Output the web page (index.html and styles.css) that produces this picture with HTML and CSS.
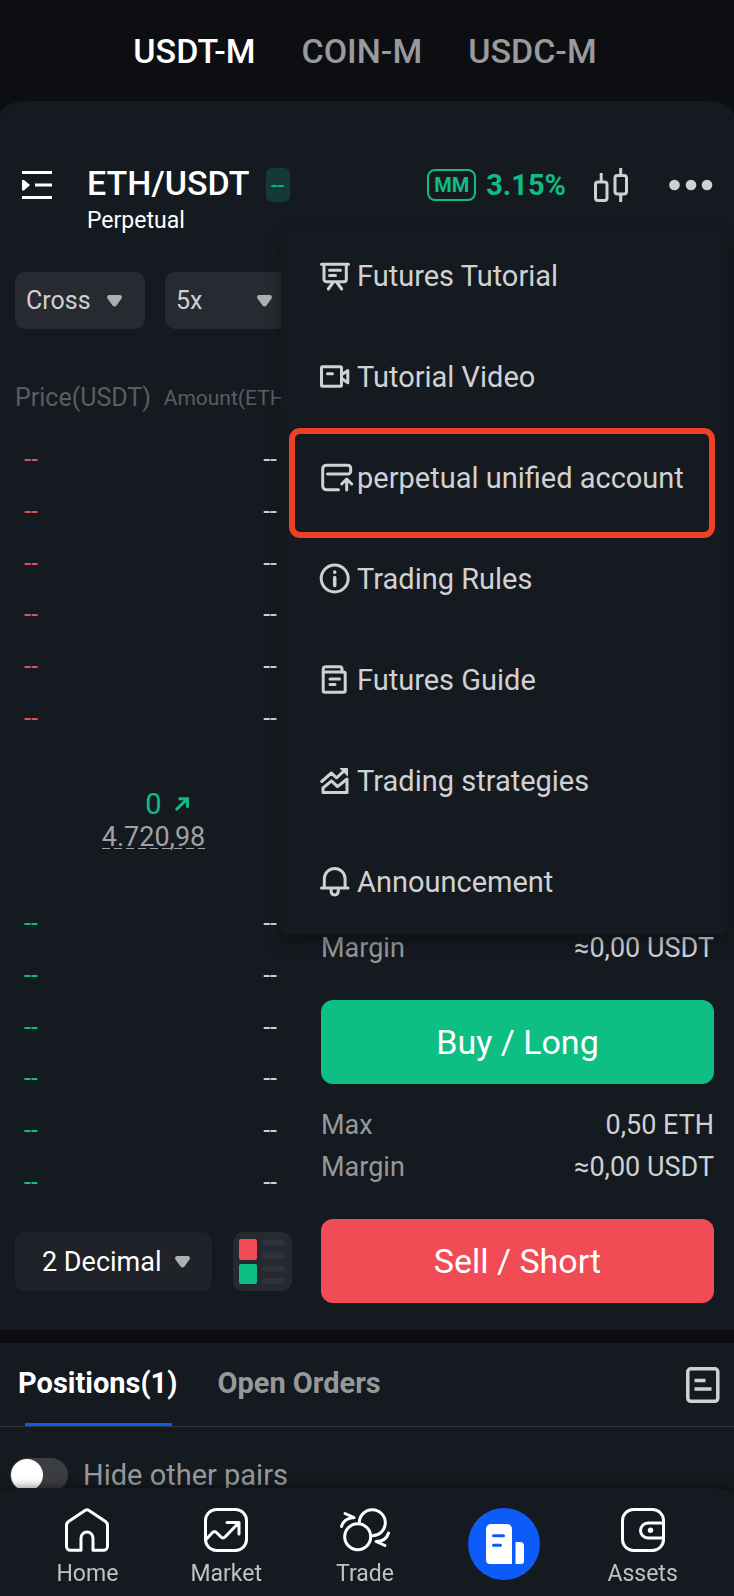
FILE: index.html
```html
<!DOCTYPE html>
<html lang="en">
<head>
    <meta charset="UTF-8">
    <meta name="viewport" content="width=device-width, initial-scale=1.0">
    <title>ETH/USDT Perpetual</title>
    <link rel="stylesheet" href="styles.css">
</head>
<body>

    <!-- Market type -->
    <nav class="market-tabs">
        <a href="#" class="active">USDT-M</a>
        <a href="#">COIN-M</a>
        <a href="#">USDC-M</a>
    </nav>

    <main class="panel">

        <header class="pair-header">
            <button class="icon-btn" aria-label="Pairs">
                <svg width="30" height="28" viewBox="0 0 30 28">
                    <path d="M0 1.5h30M13 14h17M0 26.5h30" stroke="#fff" stroke-width="3"/>
                    <path d="M0 9v10.500l2 0l6-5.500l-6-5z" fill="#fff"/>
                </svg>
            </button>
            <div class="pair">
                <div class="pair-name">
                    <h1>ETH/USDT</h1>
                    <span class="change">--</span>
                </div>
                <p>Perpetual</p>
            </div>
            <div class="pair-tools">
                <span class="mm">MM</span>
                <span class="rate">3.15%</span>
                <button class="icon-btn candles" aria-label="Chart">
                    <svg width="34" height="36" viewBox="0 0 34 36" fill="none" stroke="#d0d0d2" stroke-width="3">
                        <rect x="1.500" y="15" width="11.500" height="18.500" rx="2.500"/>
                        <rect x="21" y="8.500" width="11.500" height="18.500" rx="2.500"/>
                        <path d="M7.200 6v9M26.700 1v7M26.700 27v8"/>
                    </svg>
                </button>
                <button class="icon-btn" aria-label="More">
                    <svg width="44" height="12" viewBox="0 0 44 12" fill="#d0d0d2">
                        <circle cx="5.500" cy="6" r="5.300"/>
                        <circle cx="22" cy="6" r="5.300"/>
                        <circle cx="38" cy="6" r="5.300"/>
                    </svg>
                </button>
            </div>
        </header>

        <div class="settings">
            <div class="select">
                <select aria-label="Margin mode">
                    <option>Cross</option>
                    <option>Isolated</option>
                </select>
                <svg class="caret" viewBox="0 0 15 12"><path d="M2 0h11q3 1 1.500 3.500l-5 7q-2 2-4 0l-5-7Q-1 1 2 0z"/></svg>
            </div>
            <div class="select">
                <select aria-label="Leverage">
                    <option>5x</option>
                    <option>10x</option>
                </select>
                <svg class="caret" viewBox="0 0 15 12"><path d="M2 0h11q3 1 1.500 3.500l-5 7q-2 2-4 0l-5-7Q-1 1 2 0z"/></svg>
            </div>
        </div>

        <div class="trade">

            <!-- Order book -->
            <section class="book">
                <table class="asks">
                    <thead>
                        <tr><th>Price(USDT)</th><th class="amount">Amount(ETH)</th></tr>
                    </thead>
                    <tbody>
                        <tr><td>--</td><td>--</td></tr>
                        <tr><td>--</td><td>--</td></tr>
                        <tr><td>--</td><td>--</td></tr>
                        <tr><td>--</td><td>--</td></tr>
                        <tr><td>--</td><td>--</td></tr>
                        <tr><td>--</td><td>--</td></tr>
                    </tbody>
                </table>

                <div class="last-price">
                    <div class="last">
                        <span>0</span>
                        <svg width="14" height="14" viewBox="0 0 14 14" fill="none" stroke="#0fbd83" stroke-width="3">
                            <path d="M1 13L12 2M3.500 1.700h9v9"/>
                        </svg>
                    </div>
                    <div class="mark">4.720,98</div>
                </div>

                <table class="bids">
                    <tbody>
                        <tr><td>--</td><td>--</td></tr>
                        <tr><td>--</td><td>--</td></tr>
                        <tr><td>--</td><td>--</td></tr>
                        <tr><td>--</td><td>--</td></tr>
                        <tr><td>--</td><td>--</td></tr>
                        <tr><td>--</td><td>--</td></tr>
                    </tbody>
                </table>

                <div class="book-tools">
                    <div class="select decimals">
                        <select aria-label="Decimals">
                            <option>2 Decimal</option>
                            <option>1 Decimal</option>
                        </select>
                        <svg class="caret" viewBox="0 0 15 12"><path d="M2 0h11q3 1 1.500 3.500l-5 7q-2 2-4 0l-5-7Q-1 1 2 0z"/></svg>
                    </div>
                    <button class="depth" aria-label="Depth view">
                        <svg width="59" height="59" viewBox="0 0 59 59">
                            <rect x="6" y="7" width="18" height="21" rx="2" fill="#f14b56"/>
                            <rect x="6" y="32" width="18" height="20" rx="2" fill="#0dbf82"/>
                            <path d="M32 10.500h17M32 23.500h17M32 36.500h17M32 49h17" stroke="#30333b" stroke-width="6" stroke-linecap="round"/>
                        </svg>
                    </button>
                </div>
            </section>

            <!-- Order form -->
            <section class="order">
                <dl>
                    <div><dt>Margin</dt><dd>≈0,00 USDT</dd></div>
                </dl>
                <button class="buy">Buy / Long</button>
                <dl>
                    <div><dt>Max</dt><dd>0,50 ETH</dd></div>
                    <div><dt>Margin</dt><dd>≈0,00 USDT</dd></div>
                </dl>
                <button class="sell">Sell / Short</button>
            </section>
        </div>

        <!-- Menu opened from the three dots -->
        <div class="menu">
            <a href="#">
                <svg class="menu-icon" viewBox="0 0 30 30">
                    <path d="M1.500 3.300h27M4 4v14.500a2.200 2.200 0 0 0 2.200 2.200h17.900a2.200 2.200 0 0 0 2.200-2.200V4M9.500 9.300h11M9.500 14.500h6M13 21.500L8.300 28M17 21.500l4.700 6.500"/>
                </svg>
                Futures Tutorial
            </a>
            <a href="#">
                <svg class="menu-icon" viewBox="0 0 30 30">
                    <rect x="1.500" y="4.700" width="20" height="19.500" rx="1"/>
                    <path d="M7.500 11.700h5M22 12.500l5.800-4v12.300l-5.800-4"/>
                </svg>
                Tutorial Video
            </a>
            <a href="#" class="marked">
                <svg class="menu-icon" viewBox="0 0 30 30">
                    <path d="M18.500 26.700H6.500a3.800 3.800 0 0 1-3.800-3.800V5.800a3.500 3.500 0 0 1 3.500-3.500h21.500a3 3 0 0 1 3 3v3a2.700 2.700 0 0 1-2.700 2.700H7.500M26.700 27V16M21.700 21l5-5l5 5"/>
                </svg>
                perpetual unified account
            </a>
            <a href="#">
                <svg class="menu-icon" viewBox="0 0 30 30">
                    <circle cx="14.700" cy="14.500" r="13.500"/>
                    <path d="M14.700 13.500v8M14.700 8v.2" stroke-width="3.500"/>
                </svg>
                Trading Rules
            </a>
            <a href="#">
                <svg class="menu-icon" viewBox="0 0 30 30">
                    <rect x="3.200" y="7" width="22" height="20.300" rx="1.500"/>
                    <path d="M3.200 8V4.200a2.500 2.500 0 0 1 2.500-2.500h14a2.300 2.300 0 0 1 2.300 2.300V7M10 14h9.500M10 19.500h5"/>
                </svg>
                Futures Guide
            </a>
            <a href="#">
                <svg class="menu-icon" viewBox="0 0 30 30">
                    <path d="M1.700 15.500l9.800-8.500l5 4.800L24 5M3 26.500v-4.500l8.500-7.200l6 5.800l9.500-7.600v13.500z"/>
                    <path d="M20.500 2.500h7v7z" fill="#d1d1d3" stroke-width="1"/>
                </svg>
                Trading strategies
            </a>
            <a href="#">
                <svg class="menu-icon" viewBox="0 0 30 30">
                    <path d="M1.500 21h26.500M4.300 20.500V11.800a10.400 10.400 0 0 1 20.800 0v8.700M11 22.500q0 5.500 3.700 5.500t3.700-5.500"/>
                </svg>
                Announcement
            </a>
        </div>
    </main>

    <section class="positions">
        <div class="position-tabs">
            <button class="active">Positions(1)</button>
            <button>Open Orders</button>
            <button class="icon-btn history" aria-label="Order history">
                <svg width="34" height="36" viewBox="0 0 34 36" fill="none" stroke="#d1d1d3" stroke-width="3.500">
                    <rect x="1.800" y="1.800" width="30" height="32.500" rx="3"/>
                    <path d="M8.500 13.500h11M8.500 22h17"/>
                </svg>
            </button>
        </div>
        <label class="hide-pairs">
            <input type="checkbox">
            Hide other pairs
        </label>
    </section>

    <nav class="bottom-nav">
        <a href="#">
            <svg width="44" height="44" viewBox="0 0 44 44">
                <path d="M16 42.300H5.500a4 4 0 0 1-4-4V17.500q0-2.500 2-4L20 2.500q2-1.300 4 0l16.500 11q2 1.500 2 4v20.800a4 4 0 0 1-4 4H28V30a6 6 0 0 0-12 0z"/>
            </svg>
            Home
        </a>
        <a href="#">
            <svg width="44" height="44" viewBox="0 0 44 44">
                <rect x="1.500" y="1.500" width="41" height="41" rx="11"/>
                <path d="M2.500 31l6-6.500q2-2 4 0l4.500 4.500q2 1.800 4 0L34.500 15M23 14.500h12v11.500"/>
            </svg>
            Market
        </a>
        <a href="#">
            <svg width="50" height="44" viewBox="0 0 50 44">
                <circle cx="17.700" cy="28.700" r="13"/>
                <path d="M19.300 15A13 13 0 1 1 31.500 27.700M1.500 18.500C3 13 7 10 14 9.500L5 5.500M48.500 25C47 30 43 33.500 36 33.500L45 37.500"/>
            </svg>
            Trade
        </a>
        <a href="#" aria-label="Futures">
            <svg class="futures" width="72" height="72" viewBox="0 0 72 72">
                <circle cx="36" cy="36" r="36" fill="#0b5cf8"/>
                <path d="M23 16h16a5 5 0 0 1 5 5v35H22a4 4 0 0 1-4-4V21a5 5 0 0 1 5-5zM47.500 34H52a4 4 0 0 1 4 4v15a3 3 0 0 1-3 3h-5.500z" fill="#fff"/>
                <path d="M25.500 27.700h10M25.500 37.300h7" stroke="#0b5cf8" stroke-width="3"/>
            </svg>
        </a>
        <a href="#">
            <svg width="44" height="44" viewBox="0 0 44 44">
                <rect x="1.500" y="1.500" width="41" height="41" rx="11"/>
                <path d="M42 15H27a7.500 7.500 0 0 0 0 15h15"/>
                <circle cx="29.500" cy="22.300" r="2.700" fill="#fff" stroke="none"/>
            </svg>
            Assets
        </a>
    </nav>

</body>
</html>
```
FILE: styles.css
```css
* {
    box-sizing: border-box;
}

body {
    font-family: Roboto, sans-serif;
    background-color: #0d0e12;
    color: #fff;
    margin: 0;
    min-height: 100vh;
    display: flex;
    flex-direction: column;
}

a {
    color: inherit;
    text-decoration: none;
}

button {
    font-family: inherit;
    color: inherit;
    background: none;
    border: none;
    padding: 0;
    cursor: pointer;
}

svg {
    display: block;
    overflow: visible;
}

/* Market tabs */
.market-tabs {
    display: flex;
    justify-content: center;
    gap: 46px;
    padding: 1px 4px 0 0;
    font-size: 34px;
    font-weight: 500;
    line-height: 100px;
    color: #999a9c;
}

.market-tabs .active {
    color: #fff;
}

/* Panel */
.panel {
    position: relative;
    background-color: #151a20;
    border-radius: 28px 28px 0 0 / 14px 14px 0 0;
    padding: 62px 0 27px;
}

.pair-header {
    display: flex;
    align-items: flex-start;
    padding: 0 21px 0 22px;
}

.icon-btn {
    display: flex;
    align-items: center;
    height: 44px;
}

.pair {
    flex: 1;
    margin-left: 35px;
}

.pair-name {
    display: flex;
    align-items: center;
    gap: 16px;
    height: 40px;
}

.pair-name h1 {
    margin: 0;
    font-size: 34px;
    font-weight: 500;
}

.pair p {
    margin: 0;
    font-size: 23px;
    line-height: 36px;
}

.change {
    width: 24px;
    margin-top: 4px;
    border-radius: 6px;
    background-color: #143a37;
    color: #0fbd83;
    font-size: 24px;
    line-height: 34px;
    text-align: center;
}

.pair-tools {
    display: flex;
    align-items: center;
    color: #0fbd83;
    height: 44px;
}

.mm {
    border: 2px solid #0fbd83;
    border-radius: 8px;
    padding: 0 5px;
    font-size: 20px;
    font-weight: 700;
    line-height: 28px;
}

.rate {
    margin-left: 10px;
    font-size: 29px;
    font-weight: 700;
}

.candles {
    margin: 0 41px 0 28px;
}

/* Drop-downs */
.settings {
    display: flex;
    gap: 20px;
    padding: 33px 15px 0;
}

.select {
    display: grid;
    align-items: center;
    width: 130px;
    height: 57px;
    border-radius: 10px;
    background-color: #282a31;
    color: #d0d0d2;
}

.select select,
.caret {
    grid-area: 1 / 1;
}

.select select {
    appearance: none;
    width: 100%;
    height: 100%;
    padding: 0 0 1px 11px;
    border: none;
    background: none;
    color: inherit;
    font-family: inherit;
    font-size: 25px;
}

.caret {
    justify-self: end;
    width: 15px;
    margin-right: 23px;
    fill: #aeafb2;
    pointer-events: none;
}

/* Order book */
.trade {
    display: grid;
    grid-template-columns: 277px 1fr;
    gap: 29px;
    padding: 47px 20px 0 15px;
}

.book {
    padding-bottom: 12px;
}

.book table {
    width: 100%;
    border-collapse: collapse;
    font-size: 25px;
}

.book th {
    padding: 0 0 14px;
    font-size: 25px;
    font-weight: 400;
    line-height: 44px;
    color: #5b5d62;
    text-align: left;
    white-space: nowrap;
}

.book th.amount {
    font-size: 21px;
    text-align: right;
}

.asks {
    height: 368px;
}

.bids {
    height: 310px;
}

.book td {
    padding: 0 0 0 9px;
}

.book td:last-child {
    padding: 0 15px 0 0;
    color: #d0d0d2;
    text-align: right;
}

.asks td {
    color: #d9535d;
}

.bids td {
    color: #0fbd83;
}

.last-price {
    height: 154px;
    padding-top: 42px;
    text-align: center;
}

.last {
    display: grid;
    grid-template-columns: 1fr auto 1fr;
    align-items: center;
    gap: 13px;
    font-size: 29px;
    line-height: 36px;
    color: #0fbd83;
}

.last span {
    grid-column: 2;
}

.mark {
    display: inline-block;
    font-size: 27px;
    line-height: 30px;
    color: #a0a1a3;
    background: repeating-linear-gradient(90deg, #a0a1a3 0 8px, transparent 8px 12px) 0 26px / 100% 1px no-repeat;
}

.book-tools {
    display: flex;
    justify-content: space-between;
    margin-top: 24px;
}

.select.decimals {
    width: 197px;
    height: 59px;
    background-color: #1f2229;
    color: #fff;
}

.decimals select {
    padding: 0 0 0 27px;
    font-size: 27px;
}

.decimals .caret {
    margin-right: 22px;
}

.depth {
    border-radius: 10px;
    background-color: #272930;
}

/* Order form */
.order {
    display: flex;
    flex-direction: column;
    justify-content: flex-end;
}

.order dl {
    margin: 20px 0 31px;
    font-size: 27px;
    line-height: 42px;
}

.order dl div {
    display: flex;
    justify-content: space-between;
}

.order dt {
    color: #97989a;
}

.order dd {
    margin: 0;
    color: #d0d0d2;
}

.buy,
.sell {
    height: 84px;
    border-radius: 12px;
    font-size: 34px;
}

.buy {
    background-color: #0dbf82;
}

.sell {
    background-color: #f14b56;
}

/* Menu */
.menu {
    position: absolute;
    top: 127px;
    right: 7px;
    width: 446px;
    border-radius: 5px;
    background-color: #151a20;
    box-shadow: 0 8px 14px rgba(0, 0, 0, 0.3);
}

.menu a {
    display: flex;
    align-items: center;
    gap: 7px;
    height: 101px;
    padding: 0 0 6px 39px;
    font-size: 29px;
    color: #d1d1d3;
    white-space: nowrap;
}

.menu-icon {
    width: 30px;
    height: 30px;
    fill: none;
    stroke: #d1d1d3;
    stroke-width: 3;
    stroke-linecap: round;
    stroke-linejoin: round;
}

.marked {
    position: relative;
}

.marked::after {
    content: "";
    position: absolute;
    inset: -2px 12px -7px 8px;
    border: 6px solid #ee4024;
    border-radius: 11px;
}

/* Positions */
.positions {
    flex: 1;
    margin-top: 13px;
    background-color: #151a20;
}

.position-tabs {
    display: flex;
    align-items: center;
    gap: 40px;
    height: 84px;
    padding: 0 14px 0 18px;
    border-bottom: 1px solid #33363c;
}

.position-tabs button {
    height: 83px;
    padding-bottom: 4px;
    font-size: 29px;
    font-weight: 700;
    color: #97989a;
}

.position-tabs .active {
    position: relative;
    color: #fff;
}

.position-tabs .active::after {
    content: "";
    position: absolute;
    left: 7px;
    right: 5px;
    bottom: 0;
    height: 3px;
    background-color: #1059ea;
}

.position-tabs .history {
    margin-left: auto;
    padding: 0;
}

.hide-pairs {
    display: flex;
    align-items: center;
    gap: 15px;
    height: 96px;
    padding-left: 10px;
    font-size: 29px;
    color: #97989a;
}

.hide-pairs input {
    appearance: none;
    width: 58px;
    height: 34px;
    margin: 0;
    padding: 1px;
    border-radius: 17px;
    background-color: #3b3d43;
}

.hide-pairs input::before {
    content: "";
    display: block;
    width: 32px;
    height: 32px;
    border-radius: 50%;
    background-color: #fff;
}

.hide-pairs input:checked::before {
    margin-left: auto;
}

/* Bottom navigation */
.bottom-nav {
    position: fixed;
    left: 0;
    right: 0;
    bottom: 0;
    display: grid;
    grid-template-columns: repeat(5, 1fr);
    height: 108px;
    padding: 20px 22px 0 18px;
    border-radius: 20px 20px 0 0 / 8px 8px 0 0;
    background-color: #151a20;
    box-shadow: 0 -1px 10px rgba(0, 0, 0, 0.5);
}

.bottom-nav a {
    display: flex;
    flex-direction: column;
    align-items: center;
    font-size: 23px;
    line-height: 43px;
    color: #c0c1c3;
}

.bottom-nav svg {
    fill: none;
    stroke: #fff;
    stroke-width: 3;
    stroke-linecap: round;
    stroke-linejoin: round;
}

.bottom-nav .futures {
    stroke: none;
}
```
